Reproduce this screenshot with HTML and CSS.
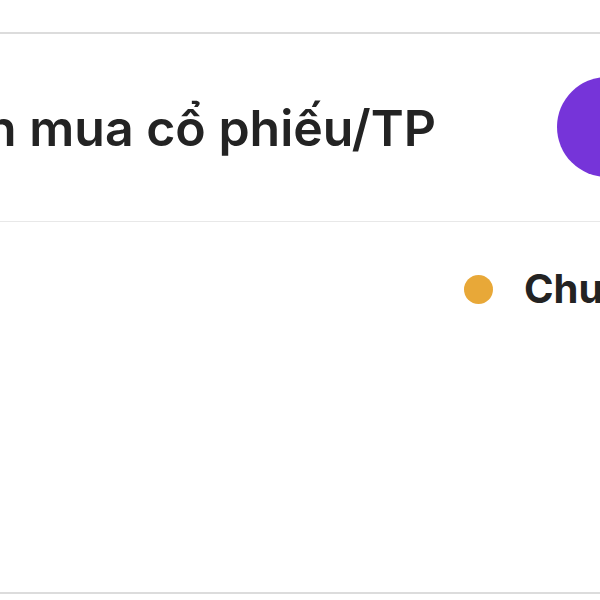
FILE: index.html
```html
<!DOCTYPE html>
<html lang="vi">
<head>
<meta charset="utf-8">
<title>Quyền mua cổ phiếu/TP</title>
<link rel="stylesheet" href="styles.css">
</head>
<body>
  <section class="card">
    <header class="card-header">
      <div class="title-wrap">
        <h2 class="title">Quyền mua cổ phiếu/TP</h2>
      </div>
      <span class="avatar"></span>
    </header>
    <div class="card-body">
      <ul class="legend">
        <li class="legend-item">
          <span class="dot dot-pending"></span>
          <span class="legend-label">Chuyển nhượng</span>
        </li>
      </ul>
    </div>
  </section>
</body>
</html>
```

FILE: styles.css
```css
html, body {
  margin: 0;
  padding: 0;
  background: #ffffff;
}

body {
  width: 600px;
  height: 600px;
  overflow: hidden;
  font-family: Inter, "Noto Sans", sans-serif;
  color: #232323;
}

.card {
  margin-top: 32px;
  border-top: 2px solid #dcdcdc;
  border-bottom: 2px solid #dcdcdc;
  background: #fff;
}

.card-header {
  height: 187px;
  display: flex;
  align-items: center;
  gap: 121px;
  border-bottom: 1px solid #e8e8e8;
}

.title-wrap {
  flex: 0 0 436px;
  min-width: 0;
  display: flex;
  justify-content: flex-end;
}

.title {
  margin: 0;
  font-size: 50px;
  font-weight: 600;
  line-height: 60px;
  white-space: nowrap;
  flex: none;
}

.avatar {
  flex: none;
  width: 100px;
  height: 100px;
  border-radius: 50%;
  background: #7634d9;
  margin-top: -2px;
}

.card-body {
  height: 370px;
  overflow: hidden;
}

.legend {
  list-style: none;
  margin: 0;
  padding: 43px 0 0 464px;
}

.legend-item {
  display: flex;
  align-items: center;
  gap: 31px;
  height: 48px;
  white-space: nowrap;
}

.dot {
  flex: none;
  width: 29px;
  height: 29px;
  border-radius: 50%;
}

.dot-pending {
  background: #e8a838;
}

.legend-label {
  font-size: 40px;
  font-weight: 700;
  line-height: 48px;
}
```
